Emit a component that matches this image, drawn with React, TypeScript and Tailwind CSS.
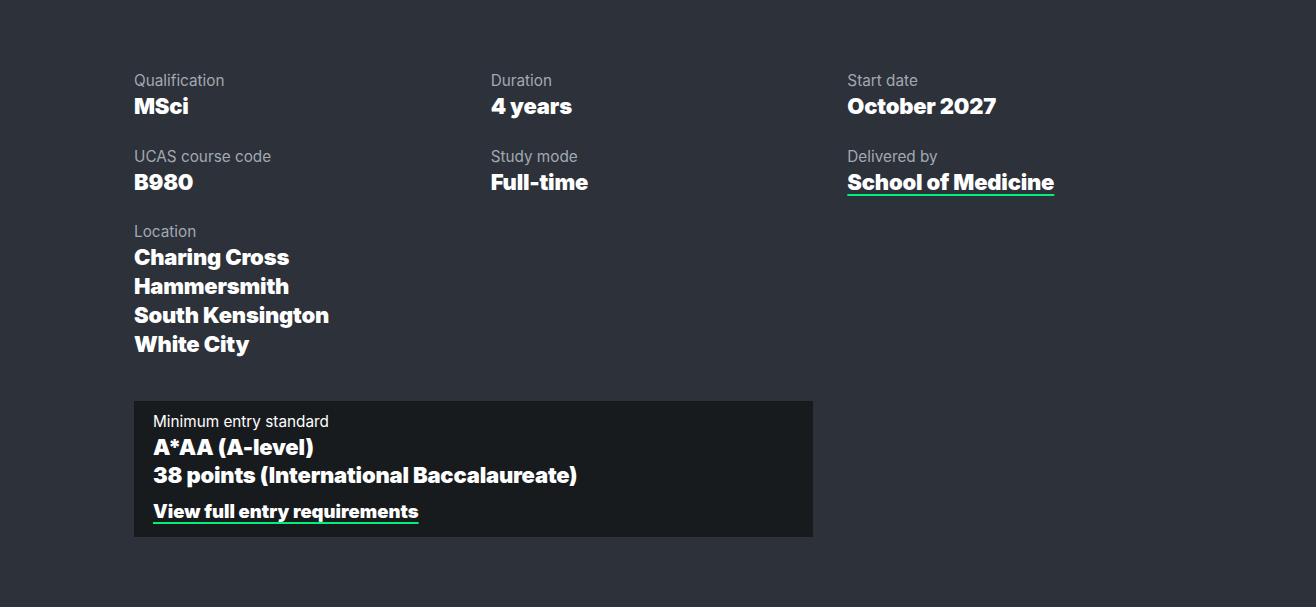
import React from 'react';

interface Fact {
  label: string;
  values: string[];
  link?: boolean;
}

const facts: Fact[] = [
  { label: 'Qualification', values: ['MSci'] },
  { label: 'Duration', values: ['4 years'] },
  { label: 'Start date', values: ['October 2027'] },
  { label: 'UCAS course code', values: ['B980'] },
  { label: 'Study mode', values: ['Full-time'] },
  { label: 'Delivered by', values: ['School of Medicine'], link: true },
  { label: 'Location', values: ['Charing Cross', 'Hammersmith', 'South Kensington', 'White City'] },
];

const underline =
  'underline decoration-[#00f07a] decoration-2 underline-offset-[4px] [text-decoration-skip-ink:auto]';

export default function App() {
  return (
    <div
      className="min-h-screen bg-[#2c313a] text-white"
      style={{ fontFamily: 'Inter, "Liberation Sans", sans-serif' }}
    >
      <div className="pl-[134px] pt-[70px]">
        {/* Key facts */}
        <dl className="grid w-[1070px] grid-cols-3 gap-y-[25px]">
          {facts.map((f) => (
            <div key={f.label}>
              <dt className="text-[15.3px] leading-[21px] text-[#a3a9b1]">{f.label}</dt>
              <dd className="pt-[1px] text-[22px] font-black leading-[28.7px] tracking-[-0.2px]">
                {f.values.map((v) =>
                  f.link ? (
                    <a key={v} href="#" className={underline}>
                      {v}
                    </a>
                  ) : (
                    <div key={v}>{v}</div>
                  )
                )}
              </dd>
            </div>
          ))}
        </dl>

        {/* Entry standard */}
        <div className="mt-[43px] w-[679px] bg-[#181b1e] px-[19px] pb-[13px] pt-[10px]">
          <p className="text-[15.3px] leading-[21px]">Minimum entry standard</p>
          <div className="pt-[1px] text-[22px] font-black leading-[28px] tracking-[-0.2px]">
            <p>A*AA (A-level)</p>
            <p>38 points (International Baccalaureate)</p>
          </div>
          <a
            href="#"
            className={`mt-[10px] inline-block text-[18.5px] font-black leading-[24px] ${underline}`}
          >
            View full entry requirements
          </a>
        </div>
      </div>
    </div>
  );
}
